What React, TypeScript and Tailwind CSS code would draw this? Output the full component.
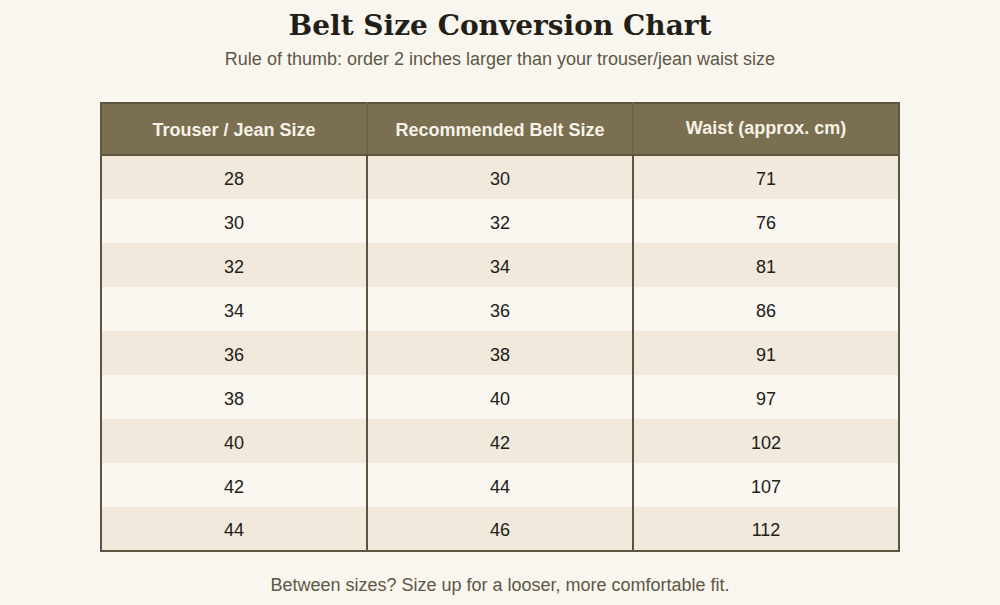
const rows: [number, number, number][] = [
  [28, 30, 71],
  [30, 32, 76],
  [32, 34, 81],
  [34, 36, 86],
  [36, 38, 91],
  [38, 40, 97],
  [40, 42, 102],
  [42, 44, 107],
  [44, 46, 112],
];

export default function App() {
  return (
    <div className="min-h-[605px] bg-[#f9f6ef] font-['Liberation_Sans',Arial,sans-serif] flex flex-col items-center pt-[9px]">
      <h1 className="font-['DejaVu_Serif',serif] font-bold text-[28px] leading-[34px] text-[#221f18]">
        Belt Size Conversion Chart
      </h1>
      <p className="mt-[5px] text-[18px] leading-[22px] text-[#5e5646]">
        Rule of thumb: order 2 inches larger than your trouser/jean waist size
      </p>

      <table className="mt-[32px] w-[800px] table-fixed border-collapse border-2 border-[#5e5540] text-[18px]">
        <thead>
          <tr className="bg-[#7a6f50] text-[#f7f2e8]">
            <th className="h-[52px] border-2 border-[#5e5540] border-r-[#6e6448] pt-[2px] font-bold">Trouser / Jean Size</th>
            <th className="h-[52px] border-2 border-[#5e5540] border-r-[#6e6448] pt-[2px] font-bold">Recommended Belt Size</th>
            <th className="h-[52px] border-2 border-[#5e5540] pb-[2px] font-bold">Waist (approx. cm)</th>
          </tr>
        </thead>
        <tbody>
          {rows.map((r, i) => (
            <tr key={i} className={i % 2 === 0 ? "bg-[#f0e9dc]" : "bg-[#faf7f0]"}>
              {r.map((v, j) => (
                <td
                  key={j}
                  className={`h-[44px] text-center text-[#222018] pt-[4px] ${j < 2 ? "border-r-2 border-[#5e5540]" : ""}`}
                >
                  {v}
                </td>
              ))}
            </tr>
          ))}
        </tbody>
      </table>

      <p className="mt-[22px] text-[18px] leading-[22px] text-[#5e5646]">
        Between sizes? Size up for a looser, more comfortable fit.
      </p>
    </div>
  );
}
